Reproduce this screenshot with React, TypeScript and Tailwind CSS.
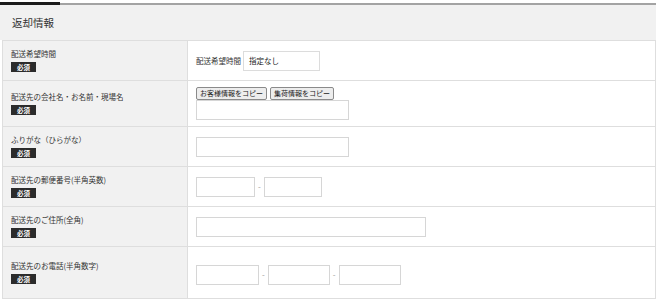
import React from "react";

const jp = { fontFamily: '"Noto Sans CJK JP", "Noto Sans", sans-serif' };

const Badge = () => (
  <span className="inline-flex w-[25px] h-[10px] items-center justify-center bg-[#2b2b2b] text-white text-[6.5px] font-bold leading-none">
    必須
  </span>
);

const Input = ({ w }: { w: string }) => (
  <div className={`${w} h-[20px] bg-white border border-[#d6d6d6]`} />
);

const Dash = () => <span className="mx-[3px] text-[#999] text-[8px] leading-none">-</span>;

type Row = { label: string; h: string; content: React.ReactNode };

const rows: Row[] = [
  {
    label: "配送希望時間",
    h: "h-[40px]",
    content: (
      <div className="flex items-center">
        <span className="text-[7.5px] text-[#333] mr-[2px]">配送希望時間</span>
        <div className="w-[77px] h-[20px] border border-[#dcdcdc] flex items-center pl-[5px] text-[7.5px] text-[#222]">
          指定なし
        </div>
      </div>
    ),
  },
  {
    label: "配送先の会社名・お名前・現場名",
    h: "h-[46px]",
    content: (
      <div className="flex flex-col">
        <div className="flex gap-[3px]">
          <button className="h-[13px] px-[3px] bg-[#ededed] border border-[#8a8a8a] rounded-[2px] text-[7px] leading-none text-[#222]">
            お客様情報をコピー
          </button>
          <button className="h-[13px] px-[3px] bg-[#ededed] border border-[#8a8a8a] rounded-[2px] text-[7px] leading-none text-[#222]">
            集荷情報をコピー
          </button>
        </div>
        <Input w="w-[153px]" />
      </div>
    ),
  },
  {
    label: "ふりがな（ひらがな）",
    h: "h-[40px]",
    content: <Input w="w-[153px]" />,
  },
  {
    label: "配送先の郵便番号(半角英数)",
    h: "h-[40px]",
    content: (
      <div className="flex items-center">
        <Input w="w-[59px]" />
        <Dash />
        <Input w="w-[58px]" />
      </div>
    ),
  },
  {
    label: "配送先のご住所(全角)",
    h: "h-[40px]",
    content: <Input w="w-[230px]" />,
  },
  {
    label: "配送先のお電話(半角数字)",
    h: "h-[52px]",
    content: (
      <div className="flex items-center pt-[4px]">
        <Input w="w-[63px]" />
        <Dash />
        <Input w="w-[62px]" />
        <Dash />
        <Input w="w-[62px]" />
      </div>
    ),
  },
];

export default function App() {
  return (
    <div className="w-[660px] h-[302px] bg-white" style={jp}>
      <div className="w-[656px]">
        <div className="flex items-start pt-[2px]">
          <div className="w-[60px] h-[3px] bg-[#1c1c1c]" />
          <div className="flex-1 h-[2px] mt-[1px] bg-[#a3a3a3]" />
        </div>
        <div className="h-[35px] bg-[#f1f1f1] flex items-center pl-[12px] text-[10.5px] text-[#333]">
          返却情報
        </div>
        <div className="ml-[2px] border-l border-r border-t border-[#dedede]">
          {rows.map((r) => (
            <div key={r.label} className={`flex ${r.h} border-b border-[#dedede]`}>
              <div className="w-[185px] bg-[#f1f1f1] border-r border-[#dedede] flex flex-col justify-center pl-[8px] gap-[3px]">
                <span className="text-[7.5px] leading-[10px] text-[#333]">{r.label}</span>
                <Badge />
              </div>
              <div className="flex-1 flex items-center pl-[8px]">{r.content}</div>
            </div>
          ))}
        </div>
      </div>
    </div>
  );
}
